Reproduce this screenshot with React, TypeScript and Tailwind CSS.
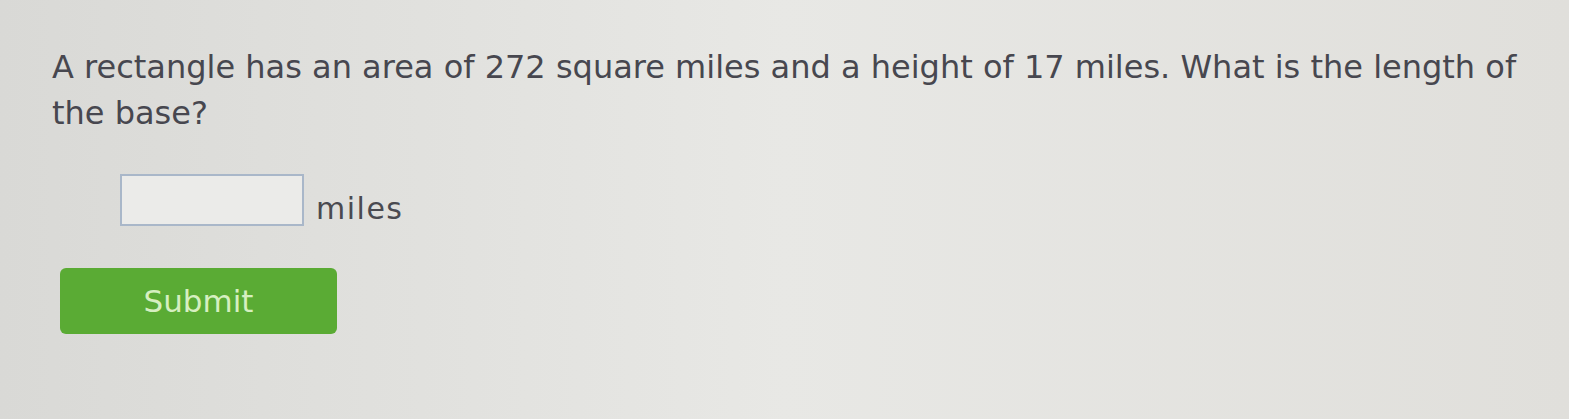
export default function App() {
  return (
    <div className="h-[419px] w-full overflow-hidden bg-gradient-to-r from-[#d9d9d6] via-[#e8e8e5] to-[#e0dfdb] font-['DejaVu_Sans',sans-serif] text-[#47474f]">
      <div className="pl-[52px] pt-[44px] pr-[20px]">
        <p className="max-w-[1490px] text-[32px] leading-[46px]">
          A rectangle has an area of 272 square miles and a height of 17 miles. What is the length of the base?
        </p>

        <div className="mt-[38px] ml-[68px] flex items-end gap-3">
          <input
            type="text"
            aria-label="answer"
            className="h-[52px] w-[184px] border-2 border-[#a9b7c9] bg-[#ebebe9] outline-none"
          />
          <span className="pb-[2px] text-[30px] leading-none tracking-[1.5px] text-[#4a4a50]">miles</span>
        </div>

        <button className="mt-[42px] ml-[8px] flex h-[66px] w-[277px] items-center justify-center rounded-md bg-[#5aab34] text-[31px] text-[#d6efc0]">
          Submit
        </button>
      </div>
    </div>
  )
}
